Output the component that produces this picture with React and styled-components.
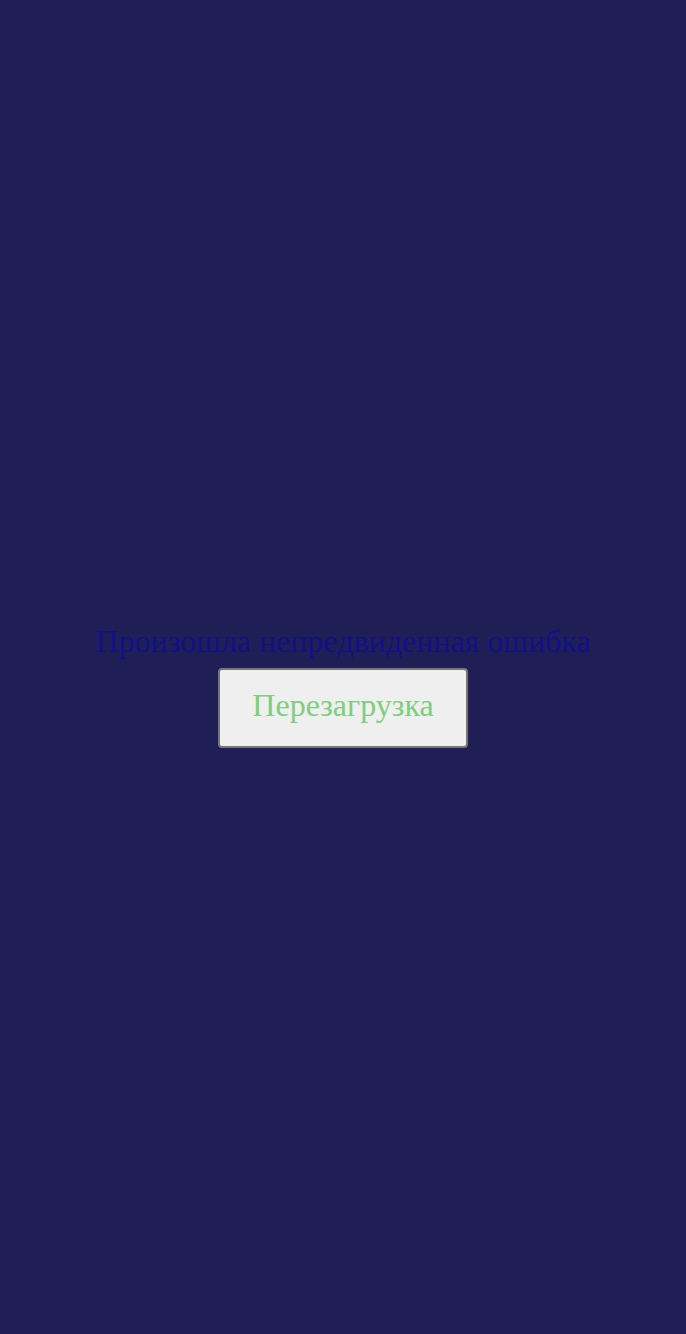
import React from "react";
import styled, { createGlobalStyle } from "styled-components";

const Global = createGlobalStyle`
  html, body { margin: 0; padding: 0; background: #1f1f55; }
  #root { min-height: 100vh; }
`;

const Screen = styled.div`
  height: 100vh;
  display: flex;
  flex-direction: column;
  align-items: center;
  justify-content: center;
  gap: 8px;
  background: #1f1f55;
  font-family: "Liberation Serif", "Times New Roman", serif;
  padding-top: 36px;
  box-sizing: border-box;
`;

const Message = styled.div`
  color: #10108a;
  font-size: 32px;
  line-height: 37px;
`;

const ReloadButton = styled.button`
  font-family: "Liberation Serif", "Times New Roman", serif;
  font-size: 32px;
  line-height: 37px;
  color: #7ccf7c;
  background: #efefef;
  border: 2px solid #767676;
  border-radius: 4px;
  padding: 17px 32px 22px;
  width: 250px;
  cursor: pointer;
`;

export default function App() {
  return (
    <>
      <Global />
      <Screen>
        <Message>Произошла непредвиденная ошибка</Message>
        <ReloadButton onClick={() => window.location.reload()}>Перезагрузка</ReloadButton>
      </Screen>
    </>
  );
}
